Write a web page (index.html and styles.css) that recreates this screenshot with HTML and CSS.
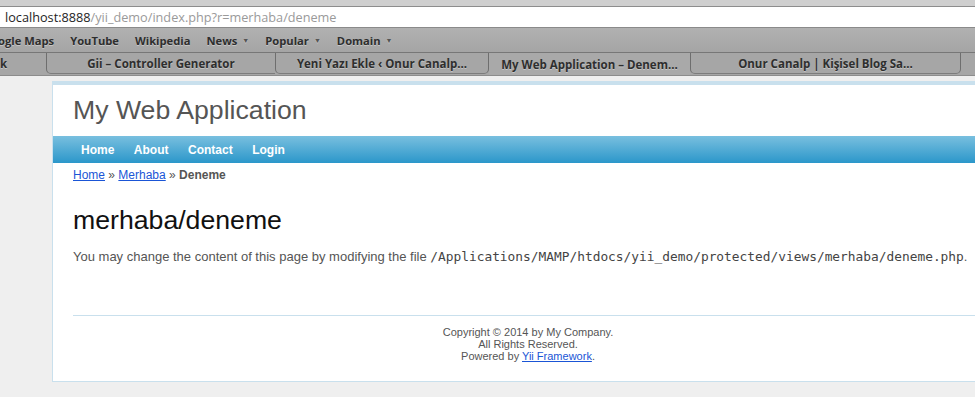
FILE: index.html
```html
<html lang="tr">
<head>
  <meta charset="UTF-8">
  <meta name="viewport" content="width=device-width, initial-scale=1.0">
  <title>My Web Application - Deneme</title>
  <link rel="stylesheet" href="styles.css">
</head>
<body>

<!-- Browser chrome -->
<div class="titlebar"></div>
<div class="address">
  <span class="host">localhost:8888</span><span class="path">/yii_demo/index.php?r=merhaba/deneme</span>
</div>
<div class="bookmarks">
  <span class="bm first">Google Maps</span>
  <span class="bm">YouTube</span>
  <span class="bm">Wikipedia</span>
  <span class="bm menu">News</span>
  <span class="bm menu">Popular</span>
  <span class="bm menu">Domain</span>
</div>
<div class="tabs">
  <div class="tab tab-0">k</div>
  <div class="tab tab-1 edge-left">Gii – Controller Generator</div>
  <div class="tab tab-2 edge-left edge-right">Yeni Yazı Ekle ‹ Onur Canalp...</div>
  <div class="tab tab-3 active">My Web Application – Denem...</div>
  <div class="tab tab-4 edge-left edge-right">Onur Canalp | Kişisel Blog Sa...</div>
  <div class="tab tab-5"></div>
</div>

<!-- Page -->
<div class="page">
  <div class="header">
    <div class="logo">My Web Application</div>
  </div>

  <div class="mainmenu">
    <ul>
      <li><a href="#">Home</a></li>
      <li><a href="#">About</a></li>
      <li><a href="#">Contact</a></li>
      <li><a href="#">Login</a></li>
    </ul>
  </div>

  <div class="breadcrumbs">
    <a href="#">Home</a> &raquo; <a href="#">Merhaba</a> &raquo; <span>Deneme</span>
  </div>

  <div class="content">
    <h1>merhaba/deneme</h1>
    <p>You may change the content of this page by modifying the file <tt>/Applications/MAMP/htdocs/yii_demo/protected/views/merhaba/deneme.php</tt>.</p>
  </div>

  <div class="footer">
    Copyright &copy; 2014 by My Company.<br>
    All Rights Reserved.<br>
    Powered by <a href="#">Yii Framework</a>.
  </div>
</div>

</body>
</html>
```

FILE: styles.css
```css
body {
  margin: 0;
  background: #efefef;
  color: #555;
  font-family: "Liberation Sans", Arial, sans-serif;
  font-size: 10pt;
  overflow: hidden;
}

a {
  color: #1a55d6;
}

/* Browser chrome */
.titlebar {
  height: 6px;
  background: #cfcfcf;
  border-bottom: 1px solid #8d8d8d;
}

.address {
  height: 20px;
  line-height: 21px;
  padding-left: 5px;
  background: #fff;
  border-bottom: 1px solid #8a8a8a;
  font-family: "Open Sans", sans-serif;
  font-size: 12.7px;
  white-space: nowrap;
}

.address .host {
  color: #1e1e1e;
}

.address .path {
  color: #9a9a9a;
}

.bookmarks {
  height: 24px;
  display: flex;
  align-items: center;
  gap: 16px;
  background: linear-gradient(#b1b1b1, #a5a5a5);
  border-bottom: 1px solid #777;
  font-family: "Open Sans", sans-serif;
  font-size: 11.2px;
  font-weight: bold;
  color: #2e2e2e;
  text-shadow: 0 1px 0 rgba(255, 255, 255, 0.35);
  white-space: nowrap;
}

.bm.first {
  margin-left: -17px;
}

.bm.menu::after {
  content: "\25BC";
  font-size: 7px;
  margin-left: 5px;
  color: #555;
  vertical-align: 2px;
}

.tabs {
  height: 22px;
  display: flex;
  background: #a6a6a6;
  border-bottom: 1px solid #8c8c8c;
  font-family: "Open Sans", sans-serif;
  font-size: 11.5px;
  font-weight: bold;
  color: #2e2e2e;
  text-shadow: 0 1px 0 rgba(255, 255, 255, 0.35);
  white-space: nowrap;
}

.tab {
  box-sizing: border-box;
  height: 21px;
  display: flex;
  align-items: center;
  justify-content: center;
  overflow: hidden;
}

.tab-0 { flex: 0 0 46px; justify-content: flex-start; }
.tab-1 { flex: 0 0 229px; }
.tab-2 { flex: 0 0 214px; }
.tab-3 { flex: 0 0 201px; height: 22px; }
.tab-4 { flex: 0 0 271px; }
.tab-5 { flex: 1; }

.edge-left {
  border-left: 1px solid #6e6e6e;
  border-bottom: 1px solid #7c7c7c;
  border-bottom-left-radius: 5px;
}

.edge-right {
  border-right: 1px solid #6e6e6e;
  border-bottom: 1px solid #7c7c7c;
  border-bottom-right-radius: 5px;
}

.tab.active {
  background: #a9a9a9;
}

/* Yii page */
.page {
  width: 950px;
  margin: 5px 0 5px 52px;
  background: #fff;
  border: 1px solid #c9e0ed;
}

.header {
  border-top: 3px solid #c9e0ed;
}

.logo {
  padding: 10px 20px;
  font-size: 200%;
  line-height: 31px;
  color: #555;
}

.mainmenu {
  background: linear-gradient(#79bfdf, #2b97ca);
}

.mainmenu ul {
  display: flex;
  gap: 3.5px;
  margin: 0;
  padding: 6px 20px 5px 20px;
  list-style: none;
  line-height: 15px;
}

.mainmenu li a {
  padding: 5px 8px;
  color: #fff;
  font-size: 12px;
  font-weight: bold;
  text-decoration: none;
}

.breadcrumbs {
  padding: 5px 20px;
  font-size: 0.9em;
  line-height: 14px;
}

.breadcrumbs span {
  font-weight: bold;
}

.content {
  padding: 20px;
}

.content h1 {
  margin: 0 0 0.5em;
  font-size: 200%;
  font-weight: normal;
  line-height: 1;
  color: #111;
}

.content p {
  margin: 0 0 18px;
  font-size: 13px;
  line-height: 20px;
  white-space: nowrap;
}

.content tt {
  font-family: "DejaVu Sans Mono", monospace;
  font-size: 12.85px;
  color: #444;
}

.footer {
  margin: 10px 20px 9px;
  padding: 10px;
  border-top: 1px solid #c9e0ed;
  font-size: 11px;
  line-height: 12px;
  text-align: center;
}
```
